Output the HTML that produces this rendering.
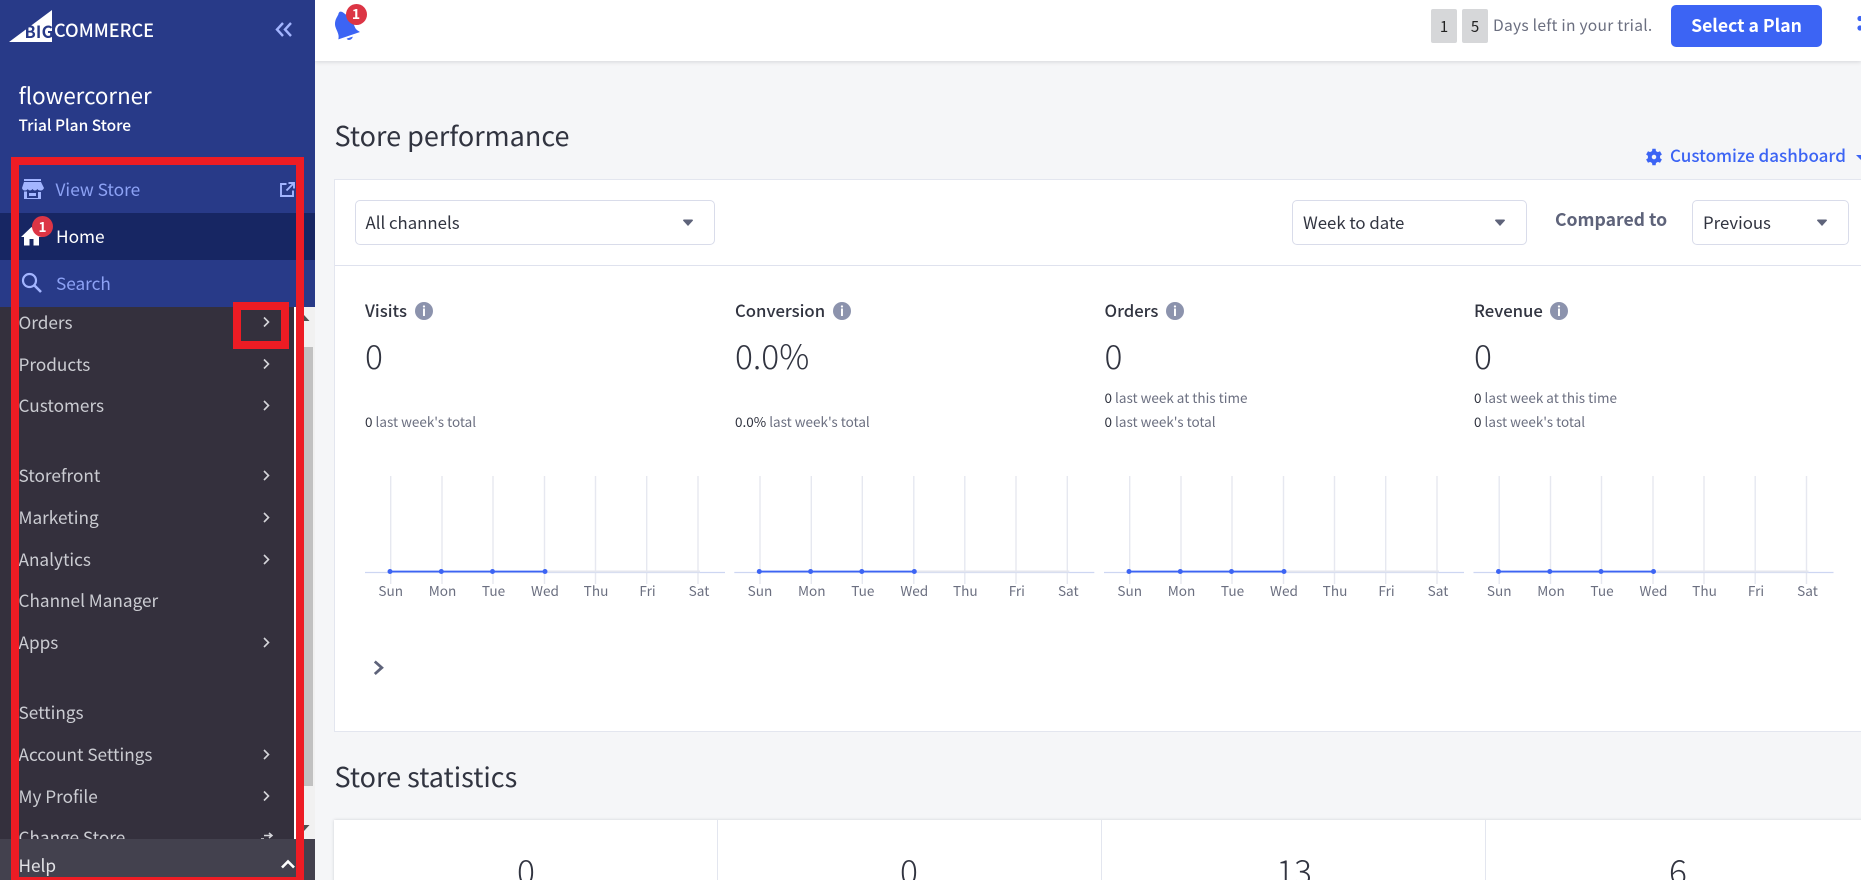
<!DOCTYPE html>
<html>
<head>
<meta charset="utf-8">
<style>
html,body{margin:0;padding:0;width:1861px;height:880px;overflow:hidden;background:#f5f6f8;}
body{position:relative;font-family:"Noto Sans CJK JP","Liberation Sans",sans-serif;color:#313440;}
div,span,svg{position:absolute;}
.t{white-space:nowrap;line-height:30px;height:30px;}
.nav{left:18.5px;font-size:17.2px;color:#cbccd2;}
.m{font-size:16.7px;font-weight:500;color:#313440;}
.n{font-size:33.5px;font-weight:200;color:#313440;line-height:50px;height:50px;}
.s{font-size:13.5px;color:#6b6f80;}
.s b{font-weight:400;color:#313440;}
.sel{background:#fff;border:1px solid #d9dcea;border-radius:5px;box-sizing:border-box;height:45px;top:199.5px;}
.selt{font-size:16.8px;top:207px;}
.info{width:18px;height:18px;border-radius:50%;background:#8c93ad;top:302px;color:#fff;font-size:13px;font-weight:700;text-align:center;line-height:18px;}
.r{background:#ed1c24;}
</style>
</head>
<body>
<!-- header -->
<div style="left:315px;top:0;width:1546px;height:61px;background:#fff;box-shadow:0 1px 4px rgba(49,52,64,.16);"></div>

<!-- bell -->
<svg style="left:320px;top:0;" width="80" height="60" viewBox="0 0 240 180">
<path d="M62 35 C68 35 72 40 78 44 C92 48 100 70 105 82 C108 90 115 92 120 96 L55 118 C60 100 45 88 45 72 C45 58 52 50 55 43 C56 38 58 35 62 35Z" fill="#3c64f4"/>
<path d="M80 116 L98 110 C98 119 84 124 80 116Z" fill="#3c64f4"/>
</svg>
<div style="left:345.5px;top:4px;width:21px;height:21px;border-radius:50%;background:#dc3545;color:#fff;font-size:14px;font-weight:700;line-height:21px;text-align:center;">1</div>

<div style="left:1431px;top:9px;width:26px;height:34px;background:#d6d7d9;border-radius:2px;text-align:center;line-height:36px;font-size:15px;color:#222;">1</div>
<div style="left:1462px;top:9px;width:26px;height:34px;background:#d6d7d9;border-radius:2px;text-align:center;line-height:36px;font-size:15px;color:#222;">5</div>
<div class="t" style="left:1493px;top:10px;font-size:15.6px;color:#6b6f80;letter-spacing:.25px;">Days left in your trial.</div>
<div style="left:1671px;top:5px;width:151px;height:42px;background:#3c64f4;border-radius:5px;color:#fff;text-align:center;font-size:17.6px;font-weight:700;line-height:42px;">Select a Plan</div>
<svg style="left:1856px;top:14px;" width="5" height="20"><circle cx="4" cy="4.5" r="2.6" fill="#3c64f4"/><circle cx="4" cy="14" r="2.6" fill="#3c64f4"/></svg>

<!-- page headings -->
<div class="t" style="left:334.5px;top:120px;font-size:27px;color:#313440;">Store performance</div>

<svg style="left:1645px;top:147.500px;" width="18" height="18" viewBox="0 0 24 24"><path fill="#3c64f4" d="M20 13.500a8 8 0 0 0 0-3l2.500-1.800-2.500-4.400-2.900 1.200a8 8 0 0 0-2.500-1.400L14.200 1h-4.400l-.4 3.100a8 8 0 0 0-2.500 1.400L4 4.300 1.500 8.700 4 10.500a8 8 0 0 0 0 3l-2.500 1.800L4 19.700l2.900-1.200a8 8 0 0 0 2.500 1.400l.4 3.100h4.400l.4-3.100a8 8 0 0 0 2.500-1.400l2.900 1.200 2.500-4.400zM12 15a3 3 0 1 1 0-6 3 3 0 0 1 0 6z"/></svg>
<div class="t" style="left:1670px;top:139.5px;font-size:17px;font-weight:500;color:#3c64f4;">Customize dashboard</div>
<svg style="left:1855px;top:153px;" width="6" height="8"><path d="M1 2 H11 L6 7Z" fill="#3c64f4"/></svg>

<!-- main card -->
<div style="left:334px;top:179px;width:1540px;height:553px;background:#fff;border:1px solid #e3e6ef;box-sizing:border-box;"></div>
<div style="left:335px;top:264.500px;width:1526px;height:1px;background:#dfe2ee;"></div>

<div class="sel" style="left:355px;width:360px;"></div>
<div class="t selt" style="left:365.500px;">All channels</div>
<svg style="left:682px;top:219px;" width="12" height="8"><path d="M1 1.500 Q1 .5 2 .5 H10 Q11 .5 11 1.500 L6 7Z" fill="#5e637a"/></svg>

<div class="sel" style="left:1292px;width:235px;"></div>
<div class="t selt" style="left:1303px;">Week to date</div>
<svg style="left:1494px;top:219px;" width="12" height="8"><path d="M1 1.500 Q1 .5 2 .5 H10 Q11 .5 11 1.500 L6 7Z" fill="#5e637a"/></svg>

<div class="t" style="left:1555px;top:205px;font-size:17.6px;font-weight:700;color:#5e637a;">Compared to</div>

<div class="sel" style="left:1692px;width:157px;"></div>
<div class="t selt" style="left:1703px;">Previous</div>
<svg style="left:1816px;top:219px;" width="12" height="8"><path d="M1 1.500 Q1 .5 2 .5 H10 Q11 .5 11 1.500 L6 7Z" fill="#5e637a"/></svg>

<!-- metrics -->
<div class="t m" style="left:365px;top:295px;">Visits</div>
<div class="info" style="left:415px;">i</div>
<div class="t n" style="left:365px;top:330px;">0</div>
<div class="t s" style="left:365px;top:406px;"><b>0</b> last week's total</div>

<div class="t m" style="left:735px;top:295px;">Conversion</div>
<div class="info" style="left:833px;">i</div>
<div class="t n" style="left:735px;top:330px;">0.0%</div>
<div class="t s" style="left:735px;top:406px;"><b>0.0%</b> last week's total</div>

<div class="t m" style="left:1104.500px;top:295px;">Orders</div>
<div class="info" style="left:1166px;">i</div>
<div class="t n" style="left:1104.500px;top:330px;">0</div>
<div class="t s" style="left:1104.500px;top:382px;"><b>0</b> last week at this time</div>
<div class="t s" style="left:1104.500px;top:406px;"><b>0</b> last week's total</div>

<div class="t m" style="left:1474px;top:295px;">Revenue</div>
<div class="info" style="left:1550px;">i</div>
<div class="t n" style="left:1474px;top:330px;">0</div>
<div class="t s" style="left:1474px;top:382px;"><b>0</b> last week at this time</div>
<div class="t s" style="left:1474px;top:406px;"><b>0</b> last week's total</div>

<!-- charts -->
<svg style="left:360px;top:470px;" width="1501" height="140" viewBox="360 470 1501 140" font-family="'Noto Sans CJK JP','Liberation Sans',sans-serif" font-size="13.6" fill="#6b6f80" text-anchor="middle">
<defs>
<g id="c">
<path d="M390.700 476V584M442 476V584M493 476V584M544.500 476V584M595.500 476V584M646.700 476V584M698 476V584" stroke="#e6e8f0" stroke-width="1.400" fill="none"/>
<path d="M365 572.500H725" stroke="#cdd6f2" stroke-width="1.300"/>
<path d="M545 571.500H700" stroke="#e4e6ee" stroke-width="2"/>
<path d="M390 571.500H545" stroke="#3c64f4" stroke-width="1.700"/>
<circle cx="390" cy="571.500" r="2.500" fill="#3c64f4"/><circle cx="441.300" cy="571.500" r="2.500" fill="#3c64f4"/><circle cx="492.500" cy="571.500" r="2.500" fill="#3c64f4"/><circle cx="545" cy="571.500" r="2.500" fill="#3c64f4"/>
</g>
</defs>
<use href="#c"/><use href="#c" x="369.300"/><use href="#c" x="739"/><use href="#c" x="1108.500"/>
<text x="390.700" y="596">Sun</text><text x="442.500" y="596">Mon</text><text x="493.500" y="596">Tue</text><text x="545" y="596">Wed</text><text x="596" y="596">Thu</text><text x="647.500" y="596">Fri</text><text x="699" y="596">Sat</text>
<text x="760" y="596">Sun</text><text x="811.800" y="596">Mon</text><text x="862.800" y="596">Tue</text><text x="914.300" y="596">Wed</text><text x="965.300" y="596">Thu</text><text x="1016.800" y="596">Fri</text><text x="1068.300" y="596">Sat</text>
<text x="1129.700" y="596">Sun</text><text x="1181.500" y="596">Mon</text><text x="1232.500" y="596">Tue</text><text x="1284" y="596">Wed</text><text x="1335" y="596">Thu</text><text x="1386.500" y="596">Fri</text><text x="1438" y="596">Sat</text>
<text x="1499.200" y="596">Sun</text><text x="1551" y="596">Mon</text><text x="1602" y="596">Tue</text><text x="1653.500" y="596">Wed</text><text x="1704.500" y="596">Thu</text><text x="1756" y="596">Fri</text><text x="1807.500" y="596">Sat</text>
</svg>

<svg style="left:372px;top:659px;" width="14" height="18"><path d="M2.800 2.500 L9.800 8.700 L2.800 15" fill="none" stroke="#5e637a" stroke-width="2.800"/></svg>

<!-- store stats -->
<div class="t" style="left:334.500px;top:761px;font-size:27px;color:#313440;">Store statistics</div>
<div style="left:334px;top:820px;width:1540px;height:80px;background:#fff;box-shadow:0 0 3px rgba(49,52,64,.18);"></div>
<div style="left:717px;top:820px;width:1px;height:60px;background:#e3e6ef;"></div>
<div style="left:1101px;top:820px;width:1px;height:60px;background:#e3e6ef;"></div>
<div style="left:1485px;top:820px;width:1px;height:60px;background:#e3e6ef;"></div>
<div class="t n" style="left:426px;top:845px;width:200px;text-align:center;">0</div>
<div class="t n" style="left:809px;top:845px;width:200px;text-align:center;">0</div>
<div class="t n" style="left:1194px;top:845px;width:200px;text-align:center;">13</div>
<div class="t n" style="left:1578px;top:845px;width:200px;text-align:center;">6</div>

<!-- sidebar -->
<div style="left:0;top:0;width:315px;height:880px;background:#283a88;overflow:hidden;">
  <div style="left:0;top:213px;width:315px;height:47px;background:#172663;"></div>
  <div style="left:0;top:307px;width:294px;height:573px;background:#34303d;"></div>
  <div style="left:294px;top:307px;width:2px;height:532px;background:#fff;"></div>
  <div style="left:296px;top:307px;width:19px;height:532px;background:#f1f1f1;"></div>
  <div style="left:296px;top:347px;width:17px;height:439px;background:#c1c1c1;"></div>
  <svg style="left:298px;top:314px;" width="12" height="8"><path d="M0 7 L6 1 L11.500 7Z" fill="#505050"/></svg>
  <svg style="left:298px;top:824px;" width="12" height="8"><path d="M0 1 H11.500 L6 7Z" fill="#505050"/></svg>

  <!-- logo -->
  <svg style="left:9px;top:10px;" width="44" height="32" viewBox="0 0 44 32"><path d="M0 32 L43 0 V32Z" fill="#fff"/></svg>
  <div class="t" style="left:24.500px;top:16px;font-size:16.500px;font-weight:700;color:#283a88;letter-spacing:.2px;">BIG</div>
  <div class="t" style="left:54px;top:15px;font-size:18.100px;font-weight:500;color:#fff;">COMMERCE</div>
  <svg style="left:275px;top:21px;" width="18" height="17"><path d="M8 2 L2 8.500 L8 15 M16 2 L10 8.500 L16 15" fill="none" stroke="#a3b5ff" stroke-width="2.400"/></svg>

  <div class="t" style="left:18.500px;top:80px;font-size:22.300px;color:#fff;">flowercorner</div>
  <div class="t" style="left:18.500px;top:110px;font-size:15.500px;font-weight:500;color:#fff;">Trial Plan Store</div>

  <!-- view store -->
  <svg style="left:21.500px;top:179px;" width="22" height="20" viewBox="0 0 22 20"><path fill="#a3b5ff" d="M2 0H19V2H2ZM2 3H19L22 9Q21 11.500 18.500 11.500 16 11.500 15.500 10 14.500 11.500 12.800 11.500 11.500 11.500 10.500 10 9.500 11.500 8 11.500 6.500 11.500 5.700 10 5 11.500 3 11.500 .5 11.500 0 9ZM2 12.500H5V19H16V13H19V20H2ZM7 14H14V17H7Z"/></svg>
  <div class="t" style="left:55.500px;top:174px;font-size:17.300px;color:#8da2f5;">View Store</div>
  <svg style="left:280px;top:182px;" width="15" height="15" viewBox="0 0 15 15"><path d="M6.500 2H1V14H13V8.500" fill="none" stroke="#a3b5ff" stroke-width="1.900"/><path d="M8.500 1H14V6.500M14 1L6.500 8.500" fill="none" stroke="#a3b5ff" stroke-width="1.900"/></svg>

  <!-- home -->
  <svg style="left:21px;top:225.500px;" width="21" height="20" viewBox="0 0 21 20"><path fill="#fff" d="M10.500 1 L21 11 H18 V19.500 H12.500 V13 H8.500 V19.500 H3 V11 H0Z"/></svg>
  <div style="left:32px;top:216px;width:21px;height:21px;border-radius:50%;background:#dc3545;color:#fff;font-size:13.500px;font-weight:700;line-height:21px;text-align:center;">1</div>
  <div class="t" style="left:56px;top:221px;font-size:17.300px;color:#fff;">Home</div>

  <!-- search -->
  <svg style="left:21px;top:272px;" width="22" height="22" viewBox="0 0 22 22"><circle cx="8.500" cy="8.500" r="6.500" fill="none" stroke="#a3b5ff" stroke-width="2.200"/><path d="M13.500 13.500L20 20" stroke="#a3b5ff" stroke-width="2.600"/></svg>
  <div class="t" style="left:56px;top:268px;font-size:17.200px;color:#8da2f5;">Search</div>

  <!-- nav -->
  <div class="t nav" style="top:307px;">Orders</div>
  <div class="t nav" style="top:349px;">Products</div>
  <div class="t nav" style="top:390px;">Customers</div>
  <div class="t nav" style="top:460px;">Storefront</div>
  <div class="t nav" style="top:502px;">Marketing</div>
  <div class="t nav" style="top:544px;">Analytics</div>
  <div class="t nav" style="top:585px;">Channel Manager</div>
  <div class="t nav" style="top:627px;">Apps</div>
  <div class="t nav" style="top:697px;">Settings</div>
  <div class="t nav" style="top:739px;">Account Settings</div>
  <div class="t nav" style="top:781px;">My Profile</div>
  <div class="t nav" style="top:822px;">Change Store</div>

  <svg style="left:0;top:0;" width="294" height="880"><path d="M264 317.500l4.500 4.500-4.500 4.500M264 359.500l4.500 4.500-4.500 4.500M264 401l4.500 4.500-4.500 4.500M264 471l4.500 4.500-4.500 4.500M264 513l4.500 4.500-4.500 4.500M264 555l4.500 4.500-4.500 4.500M264 638l4.500 4.500-4.500 4.500M264 750l4.500 4.500-4.500 4.500M264 791.500l4.500 4.500-4.500 4.500" fill="none" stroke="#d5d5da" stroke-width="1.600"/><path d="M264 835.500h8M269 833l3 2.500-3 2.500M261 839h3" fill="none" stroke="#d5d5da" stroke-width="1.500"/></svg>

  <!-- help bar -->
  <div style="left:0;top:839px;width:315px;height:41px;background:#43414e;"></div>
  <div class="t nav" style="top:850px;color:#e2e2e6;">Help</div>
  <svg style="left:280px;top:858px;" width="16" height="12"><path d="M2 9.500 L8 3.500 L14 9.500" fill="none" stroke="#fff" stroke-width="2.600"/></svg>

  <!-- annotation frames -->
  <div class="r" style="left:11px;top:157px;width:293px;height:8px;"></div>
  <div class="r" style="left:11px;top:877px;width:293px;height:3px;"></div>
  <div class="r" style="left:11px;top:157px;width:8px;height:723px;"></div>
  <div class="r" style="left:296px;top:157px;width:8px;height:723px;"></div>
  <div style="left:233px;top:302px;width:56px;height:47px;border:8px solid #ed1c24;box-sizing:border-box;"></div>
</div>
</body>
</html>
